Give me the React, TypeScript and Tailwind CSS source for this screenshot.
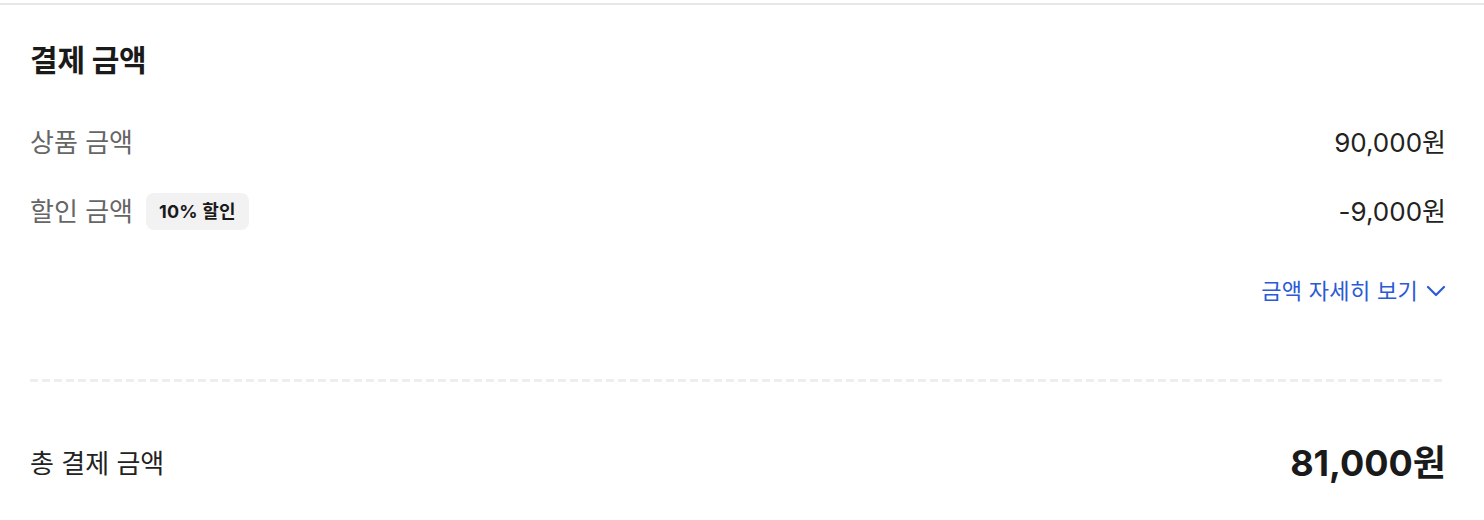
type Row = {
  label: string;
  value: string;
  badge?: string;
};

const ROWS: Row[] = [
  { label: "상품 금액", value: "90,000원" },
  { label: "할인 금액", value: "-9,000원", badge: "10% 할인" },
];

export default function App() {
  return (
    <div className="w-[1484px] h-[520px] bg-white font-['Inter','Noto_Sans_CJK_KR',sans-serif] overflow-hidden">
      <div className="mt-[3px] h-[2px] bg-[#e6e6e6]" />

      <section className="pl-[30px] pr-[38px] pt-[37px]">
        <h2 className="text-[30px] leading-[36px] font-bold text-[#1a1a1a] tracking-[-0.2px]">
          결제 금액
        </h2>

        <ul className="mt-[46px] space-y-[32px]">
          {ROWS.map((row) => (
            <li key={row.label} className="h-[37px] flex items-center justify-between">
              <div className="flex items-center gap-[13px]">
                <span className="text-[26px] text-[#666666]">{row.label}</span>
                {row.badge && (
                  <span className="h-[37px] px-[13px] rounded-[8px] bg-[#f2f2f2] flex items-center text-[18px] font-bold text-[#1a1a1a] tracking-[0.2px]">
                    {row.badge}
                  </span>
                )}
              </div>
              <span className="text-[26px] text-[#222222]">{row.value}</span>
            </li>
          ))}
        </ul>

        <div className="mt-[47px] h-[28px] flex justify-end">
          <button className="flex items-center gap-[8px] text-[22px] text-[#2a5ad6] tracking-[0.3px]">
            금액 자세히 보기
            <svg width="20" height="12" viewBox="0 0 20 12" fill="none">
              <path d="M2 2L10 10L18 2" stroke="currentColor" strokeWidth="2.2" strokeLinecap="round" strokeLinejoin="round" />
            </svg>
          </button>
        </div>

        <div className="mt-[74px] h-[3px] bg-[repeating-linear-gradient(90deg,#eeeeee_0_8px,transparent_8px_12px)]" />

        <div className="mt-[59px] h-[44px] flex items-center justify-between">
          <span className="text-[26px] text-[#222222]">총 결제 금액</span>
          <span className="text-[36px] font-bold text-[#1a1a1a]">81,000원</span>
        </div>
      </section>
    </div>
  );
}
